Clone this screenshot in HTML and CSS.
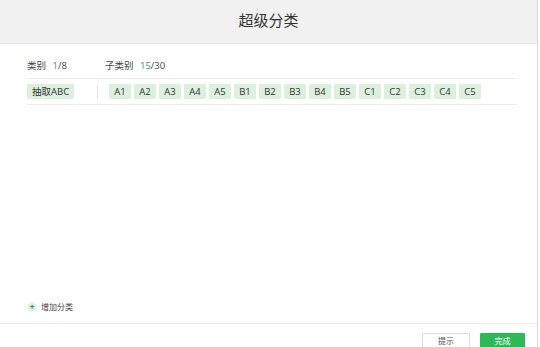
FILE: index.html
```html
<!DOCTYPE html>
<html lang="zh-CN">
<head>
  <meta charset="UTF-8" />
  <meta name="viewport" content="width=device-width, initial-scale=1.0"/>
  <title>超级分类</title>
  <link rel="stylesheet" href="styles.css">
</head>
<body>

<div class="dialog">
  <div class="dialog-head">超级分类</div>

  <div class="dialog-main">
    <div class="stats">
      <div class="stat stat-cat">类别 <span class="num">1</span>/8</div>
      <div class="stat">子类别 <span class="num">15</span>/30</div>
    </div>

    <div class="tag-row">
      <div class="cat-col">
        <span class="tag">抽取ABC</span>
      </div>
      <div class="sub-col">
        <span class="tag">A1</span>
        <span class="tag">A2</span>
        <span class="tag">A3</span>
        <span class="tag">A4</span>
        <span class="tag">A5</span>
        <span class="tag">B1</span>
        <span class="tag">B2</span>
        <span class="tag">B3</span>
        <span class="tag">B4</span>
        <span class="tag">B5</span>
        <span class="tag">C1</span>
        <span class="tag">C2</span>
        <span class="tag">C3</span>
        <span class="tag">C4</span>
        <span class="tag">C5</span>
      </div>
    </div>

    <div class="add-row">
      <span class="add-icon">+</span>
      <span>增加分类</span>
    </div>
  </div>

  <div class="dialog-foot">
    <button class="btn btn-hint">提示</button>
    <button class="btn btn-done">完成</button>
  </div>
</div>

</body>
</html>
```

FILE: styles.css
```css
body {
  margin: 0;
  font-family: "Open Sans", "Noto Sans CJK SC", sans-serif;
  background: #fff;
  color: #333;
}
.dialog {
  width: 537px;
  height: 347px;
  border-right: 1px solid #d9d9d9;
  display: flex;
  flex-direction: column;
  overflow: hidden;
}
.dialog-head {
  flex-shrink: 0;
  height: 43px;
  line-height: 41px;
  background-color: #f1f1f1;
  border-bottom: 1px solid #e9e9e9;
  text-align: center;
  font-size: 15px;
  color: #333;
}
.dialog-main {
  flex-shrink: 0;
  height: 279px;
  padding: 0 20px 0 27px;
  display: flex;
  flex-direction: column;
}
.stats {
  display: flex;
  padding: 16px 0 6px;
  border-bottom: 1px solid #ececec;
  font-size: 9.5px;
  line-height: 12px;
  color: #444;
}
.stat-cat {
  width: 78px;
}
.num {
  color: #2e9e55;
  margin-left: 4px;
}
.tag-row {
  display: flex;
  align-items: center;
  padding: 5px 0;
  border-bottom: 1px solid #ececec;
}
.cat-col {
  width: 70px;
  border-right: 1px solid #e3e3e3;
  height: 14px;
  display: flex;
  align-items: center;
}
.sub-col {
  display: flex;
  gap: 3px;
  padding-left: 11px;
}
.tag {
  display: inline-block;
  height: 15px;
  line-height: 15px;
  padding: 0 5px;
  min-width: 12px;
  text-align: center;
  background-color: #ddf0de;
  border-radius: 1px;
  font-size: 9.5px;
  color: #333;
}
.add-row {
  margin-top: auto;
  padding-bottom: 11px;
  display: flex;
  align-items: center;
  gap: 4px;
  font-size: 8px;
  color: #444;
}
.add-icon {
  width: 10px;
  height: 10px;
  line-height: 10px;
  border-radius: 50%;
  background-color: #e3f3e7;
  color: #2e9e55;
  text-align: center;
  font-size: 9px;
  font-weight: bold;
}
.dialog-foot {
  flex-shrink: 0;
  border-top: 1px solid #eeeeee;
  padding: 9px 12px 0 0;
  display: flex;
  justify-content: flex-end;
  gap: 10px;
}
.btn {
  flex-shrink: 0;
  height: 22px;
  padding: 0 0 7px;
  font-family: "Open Sans", "Noto Sans CJK SC", sans-serif;
  font-size: 8px;
  line-height: 12px;
  border-radius: 1px;
}
.btn-hint {
  width: 48px;
  background: #fff;
  border: 1px solid #dcdcdc;
  color: #555;
}
.btn-done {
  width: 45px;
  background-color: #2fb85a;
  border: 1px solid #2fb85a;
  color: #fff;
}
```
